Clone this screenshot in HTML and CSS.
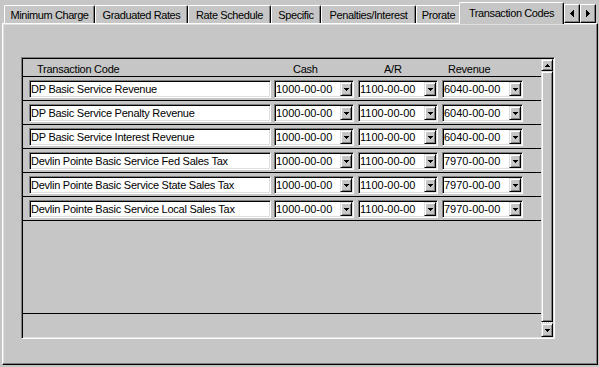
FILE: index.html
```html
<!DOCTYPE html>
<html>
<head>
<meta charset="utf-8">
<link rel="stylesheet" href="styles.css">
</head>
<body>
<div class="tabstrip">
  <div class="tab w-min">Minimum Charge</div>
  <div class="tab w-grad">Graduated Rates</div>
  <div class="tab w-sched">Rate Schedule</div>
  <div class="tab w-spec">Specific</div>
  <div class="tab w-pen">Penalties/Interest</div>
  <div class="tab w-pro">Prorate</div>
  <div class="tab tab-sel w-trans">Transaction Codes</div>
  <div class="spin">
    <div class="spin-btn"><svg width="4" height="7" viewBox="0 0 4 7"><path d="M0 3h1v1H0zM1 2h1v3H1zM2 1h1v5H2zM3 0h1v7H3z"/></svg></div>
    <div class="spin-btn"><svg width="4" height="7" viewBox="0 0 4 7"><path d="M3 3h1v1H3zM2 2h1v3H2zM1 1h1v5H1zM0 0h1v7H0z"/></svg></div>
  </div>
</div>
<div class="panel">
  <div class="grid">
    <div class="rows">
      <div class="hdr">
        <span class="h-code">Transaction Code</span>
        <span class="h-cash">Cash</span>
        <span class="h-ar">A/R</span>
        <span class="h-rev">Revenue</span>
      </div>
      <div class="row">
        <div class="field code">DP Basic Service Revenue</div>
        <div class="field combo c-cash"><span class="combo-text">1000-00-00</span><span class="combo-btn"><svg width="5" height="3" viewBox="0 0 5 3"><path d="M0 0h5v1H0zM1 1h3v1H1zM2 2h1v1H2z"/></svg></span></div>
        <div class="field combo c-ar"><span class="combo-text">1100-00-00</span><span class="combo-btn"><svg width="5" height="3" viewBox="0 0 5 3"><path d="M0 0h5v1H0zM1 1h3v1H1zM2 2h1v1H2z"/></svg></span></div>
        <div class="field combo c-rev"><span class="combo-text">6040-00-00</span><span class="combo-btn"><svg width="5" height="3" viewBox="0 0 5 3"><path d="M0 0h5v1H0zM1 1h3v1H1zM2 2h1v1H2z"/></svg></span></div>
      </div>
      <div class="row">
        <div class="field code">DP Basic Service Penalty Revenue</div>
        <div class="field combo c-cash"><span class="combo-text">1000-00-00</span><span class="combo-btn"><svg width="5" height="3" viewBox="0 0 5 3"><path d="M0 0h5v1H0zM1 1h3v1H1zM2 2h1v1H2z"/></svg></span></div>
        <div class="field combo c-ar"><span class="combo-text">1100-00-00</span><span class="combo-btn"><svg width="5" height="3" viewBox="0 0 5 3"><path d="M0 0h5v1H0zM1 1h3v1H1zM2 2h1v1H2z"/></svg></span></div>
        <div class="field combo c-rev"><span class="combo-text">6040-00-00</span><span class="combo-btn"><svg width="5" height="3" viewBox="0 0 5 3"><path d="M0 0h5v1H0zM1 1h3v1H1zM2 2h1v1H2z"/></svg></span></div>
      </div>
      <div class="row">
        <div class="field code">DP Basic Service Interest Revenue</div>
        <div class="field combo c-cash"><span class="combo-text">1000-00-00</span><span class="combo-btn"><svg width="5" height="3" viewBox="0 0 5 3"><path d="M0 0h5v1H0zM1 1h3v1H1zM2 2h1v1H2z"/></svg></span></div>
        <div class="field combo c-ar"><span class="combo-text">1100-00-00</span><span class="combo-btn"><svg width="5" height="3" viewBox="0 0 5 3"><path d="M0 0h5v1H0zM1 1h3v1H1zM2 2h1v1H2z"/></svg></span></div>
        <div class="field combo c-rev"><span class="combo-text">6040-00-00</span><span class="combo-btn"><svg width="5" height="3" viewBox="0 0 5 3"><path d="M0 0h5v1H0zM1 1h3v1H1zM2 2h1v1H2z"/></svg></span></div>
      </div>
      <div class="row">
        <div class="field code">Devlin Pointe Basic Service Fed Sales Tax</div>
        <div class="field combo c-cash"><span class="combo-text">1000-00-00</span><span class="combo-btn"><svg width="5" height="3" viewBox="0 0 5 3"><path d="M0 0h5v1H0zM1 1h3v1H1zM2 2h1v1H2z"/></svg></span></div>
        <div class="field combo c-ar"><span class="combo-text">1100-00-00</span><span class="combo-btn"><svg width="5" height="3" viewBox="0 0 5 3"><path d="M0 0h5v1H0zM1 1h3v1H1zM2 2h1v1H2z"/></svg></span></div>
        <div class="field combo c-rev"><span class="combo-text">7970-00-00</span><span class="combo-btn"><svg width="5" height="3" viewBox="0 0 5 3"><path d="M0 0h5v1H0zM1 1h3v1H1zM2 2h1v1H2z"/></svg></span></div>
      </div>
      <div class="row">
        <div class="field code">Devlin Pointe Basic Service State Sales Tax</div>
        <div class="field combo c-cash"><span class="combo-text">1000-00-00</span><span class="combo-btn"><svg width="5" height="3" viewBox="0 0 5 3"><path d="M0 0h5v1H0zM1 1h3v1H1zM2 2h1v1H2z"/></svg></span></div>
        <div class="field combo c-ar"><span class="combo-text">1100-00-00</span><span class="combo-btn"><svg width="5" height="3" viewBox="0 0 5 3"><path d="M0 0h5v1H0zM1 1h3v1H1zM2 2h1v1H2z"/></svg></span></div>
        <div class="field combo c-rev"><span class="combo-text">7970-00-00</span><span class="combo-btn"><svg width="5" height="3" viewBox="0 0 5 3"><path d="M0 0h5v1H0zM1 1h3v1H1zM2 2h1v1H2z"/></svg></span></div>
      </div>
      <div class="row">
        <div class="field code">Devlin Pointe Basic Service Local Sales Tax</div>
        <div class="field combo c-cash"><span class="combo-text">1000-00-00</span><span class="combo-btn"><svg width="5" height="3" viewBox="0 0 5 3"><path d="M0 0h5v1H0zM1 1h3v1H1zM2 2h1v1H2z"/></svg></span></div>
        <div class="field combo c-ar"><span class="combo-text">1100-00-00</span><span class="combo-btn"><svg width="5" height="3" viewBox="0 0 5 3"><path d="M0 0h5v1H0zM1 1h3v1H1zM2 2h1v1H2z"/></svg></span></div>
        <div class="field combo c-rev"><span class="combo-text">7970-00-00</span><span class="combo-btn"><svg width="5" height="3" viewBox="0 0 5 3"><path d="M0 0h5v1H0zM1 1h3v1H1zM2 2h1v1H2z"/></svg></span></div>
      </div>
      <div class="spacer"></div>
      <div class="footer"></div>
    </div>
    <div class="vscroll">
      <div class="raised sb-up"><svg width="5" height="3" viewBox="0 0 5 3"><path d="M2 0h1v1H2zM1 1h3v1H1zM0 2h5v1H0z"/></svg></div>
      <div class="raised sb-thumb"></div>
      <div class="raised sb-down"><svg width="5" height="3" viewBox="0 0 5 3"><path d="M0 0h5v1H0zM1 1h3v1H1zM2 2h1v1H2z"/></svg></div>
    </div>
  </div>
</div>
</body>
</html>
```

FILE: styles.css
```css
* { box-sizing: border-box; }

body {
  margin: 0;
  width: 599px;
  height: 367px;
  overflow: hidden;
  background: #c6c6c6;
  font-family: "Liberation Sans", Arial, sans-serif;
  font-size: 11px;
  letter-spacing: -0.25px;
  color: #000;
}

svg { display: block; fill: #000; shape-rendering: crispEdges; }

/* ---- tab strip ---- */
.tabstrip {
  display: flex;
  align-items: flex-end;
  height: 23px;
  padding: 0 3px 0 4px;
}

.tab {
  height: 18px;
  border: 1px solid #fff;
  border-bottom: 0;
  border-right-color: #000;
  border-radius: 2px 2px 0 0;
  box-shadow: inset -1px 0 #808080;
  text-align: center;
  line-height: 18px;
  white-space: nowrap;
  letter-spacing: -0.4px;
  background: #c6c6c6;
}

.w-min { width: 91px; }
.w-grad { width: 93px; }
.w-sched { width: 83px; }
.w-spec { width: 50px; }
.w-pen { width: 95px; }
.w-pro { width: 45px; }
.w-trans { width: 105px; }

.tab-sel {
  height: 22px;
  margin: 0 -2px -1px;
  position: relative;
  line-height: 18px;
  padding-top: 1px;
}

.spin {
  display: flex;
  margin-left: auto;
}

.spin-btn {
  width: 16px;
  height: 19px;
  border: 1px solid;
  border-color: #fff #000 #000 #fff;
  box-shadow: inset -1px -1px #808080;
  display: flex;
  align-items: center;
  justify-content: center;
}

/* ---- panel ---- */
.panel {
  margin-left: 2px;
  width: 596px;
  height: 342px;
  border: 1px solid;
  border-color: #fff #000 #000 #fff;
  box-shadow: inset -1px -1px #808080, inset 1px 1px #dfdfdf;
  padding: 33px 0 0 18px;
}

.grid {
  width: 534px;
  height: 282px;
  border: 1px solid;
  border-color: #808080 #fff #fff #808080;
  box-shadow: inset 1px 1px #000, inset -1px -1px #dfdfdf;
  padding: 1px;
  display: flex;
}

.rows {
  width: 518px;
  display: flex;
  flex-direction: column;
}

.hdr {
  height: 18px;
  border-bottom: 1px solid #000;
  display: flex;
  padding: 4px 0 0 6px;
  line-height: 13px;
  white-space: nowrap;
}

.h-code { width: 242px; padding-left: 8px; }
.h-cash { width: 80px; margin-left: 3px; padding-left: 19px; }
.h-ar { width: 80px; margin-left: 4px; padding-left: 26px; }
.h-rev { width: 81px; margin-left: 4px; padding-left: 6px; }

.row {
  height: 24px;
  border-bottom: 1px solid #000;
  display: flex;
  align-items: flex-start;
  padding: 3px 0 0 6px;
}

.field {
  height: 18px;
  background: #fff;
  border: 1px solid;
  border-color: #808080 #fff #fff #808080;
  box-shadow: inset 1px 1px #000, inset -1px -1px #dfdfdf;
  padding: 1px;
  line-height: 14px;
  white-space: nowrap;
  overflow: hidden;
}

.code { width: 242px; }

.combo { display: flex; }
.c-cash { width: 80px; margin-left: 3px; }
.c-ar { width: 80px; margin-left: 4px; }
.c-rev { width: 81px; margin-left: 4px; }

.combo-text {
  flex: 1;
  letter-spacing: 0;
}

.combo-btn {
  width: 12px;
  height: 14px;
  background: #c6c6c6;
  border: 1px solid;
  border-color: #dfdfdf #000 #000 #dfdfdf;
  box-shadow: inset 1px 1px #fff, inset -1px -1px #808080;
  display: flex;
  align-items: center;
  justify-content: center;
}

.spacer { flex: 1; }

.footer {
  height: 24px;
  border-top: 1px solid #000;
}

/* ---- scrollbar ---- */
.vscroll {
  width: 12px;
  display: flex;
  flex-direction: column;
  background: repeating-conic-gradient(#fff 0 25%, #c6c6c6 0 50%) 0 0 / 2px 2px;
}

.raised {
  background: #c6c6c6;
  border: 1px solid;
  border-color: #dfdfdf #000 #000 #dfdfdf;
  box-shadow: inset 1px 1px #fff, inset -1px -1px #808080;
  display: flex;
  align-items: center;
  justify-content: center;
}

.sb-up { height: 12px; }
.sb-thumb { flex: 1; margin-bottom: 1px; }
.sb-down { height: 14px; }
```
